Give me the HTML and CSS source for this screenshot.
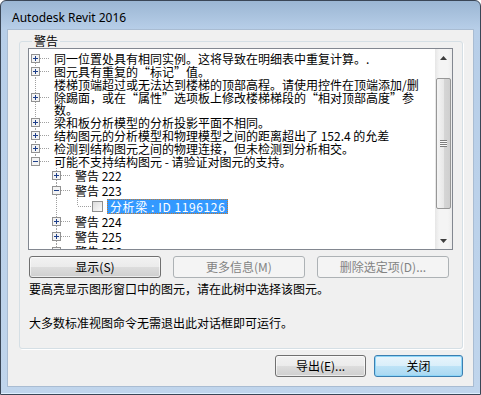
FILE: index.html
```html
<!DOCTYPE html>
<html lang="zh-CN">
<head>
  <meta charset="UTF-8" />
  <title>Autodesk Revit 2016</title>
  <link rel="stylesheet" href="styles.css">
</head>
<body>

  <div class="window">
    <div class="titlebar">Autodesk Revit 2016</div>

    <div class="client">
      <fieldset class="group">
        <legend>警告</legend>

        <div class="tree-box">
          <div class="tree">
            <div class="row">
              <span class="c start"><svg class="exp" viewBox="0 0 9 9"><rect x=".5" y=".5" width="8" height="8" /><path d="M2 4.5h5M4.5 2v5" /></svg></span>
              <span class="lbl">同一位置处具有相同实例。这将导致在明细表中重复计算。.</span>
            </div>
            <div class="row">
              <span class="c tee"><svg class="exp" viewBox="0 0 9 9"><rect x=".5" y=".5" width="8" height="8" /><path d="M2 4.5h5M4.5 2v5" /></svg></span>
              <span class="lbl">图元具有重复的“标记”值。</span>
            </div>
            <div class="row multi">
              <span class="c tee"><svg class="exp" viewBox="0 0 9 9"><rect x=".5" y=".5" width="8" height="8" /><path d="M2 4.5h5M4.5 2v5" /></svg></span>
              <span class="lbl">楼梯顶端超过或无法达到楼梯的顶部高程。请使用控件在顶端添加/删<br>除踢面，或在“属性”选项板上修改楼梯梯段的“相对顶部高度”参<br>数。</span>
            </div>
            <div class="row">
              <span class="c tee"><svg class="exp" viewBox="0 0 9 9"><rect x=".5" y=".5" width="8" height="8" /><path d="M2 4.5h5M4.5 2v5" /></svg></span>
              <span class="lbl">梁和板分析模型的分析投影平面不相同。</span>
            </div>
            <div class="row">
              <span class="c tee"><svg class="exp" viewBox="0 0 9 9"><rect x=".5" y=".5" width="8" height="8" /><path d="M2 4.5h5M4.5 2v5" /></svg></span>
              <span class="lbl">结构图元的分析模型和物理模型之间的距离超出了 152.4 的允差</span>
            </div>
            <div class="row">
              <span class="c tee"><svg class="exp" viewBox="0 0 9 9"><rect x=".5" y=".5" width="8" height="8" /><path d="M2 4.5h5M4.5 2v5" /></svg></span>
              <span class="lbl">检测到结构图元之间的物理连接，但未检测到分析相交。</span>
            </div>
            <div class="row">
              <span class="c end"><svg class="exp" viewBox="0 0 9 9"><rect x=".5" y=".5" width="8" height="8" /><path d="M2 4.5h5" /></svg></span>
              <span class="lbl">可能不支持结构图元 - 请验证对图元的支持。</span>
            </div>

            <div class="row sub">
              <span class="c"></span>
              <span class="c tee"><svg class="exp" viewBox="0 0 9 9"><rect x=".5" y=".5" width="8" height="8" /><path d="M2 4.5h5M4.5 2v5" /></svg></span>
              <span class="lbl">警告 222</span>
            </div>
            <div class="row sub">
              <span class="c"></span>
              <span class="c tee"><svg class="exp" viewBox="0 0 9 9"><rect x=".5" y=".5" width="8" height="8" /><path d="M2 4.5h5" /></svg></span>
              <span class="lbl">警告 223</span>
            </div>
            <div class="row leaf">
              <span class="c"></span>
              <span class="c pipe"></span>
              <span class="c end"></span>
              <span class="check"></span>
              <span class="lbl selected">分析梁 : ID 1196126</span>
            </div>
            <div class="row sub">
              <span class="c"></span>
              <span class="c tee"><svg class="exp" viewBox="0 0 9 9"><rect x=".5" y=".5" width="8" height="8" /><path d="M2 4.5h5M4.5 2v5" /></svg></span>
              <span class="lbl">警告 224</span>
            </div>
            <div class="row sub">
              <span class="c"></span>
              <span class="c tee"><svg class="exp" viewBox="0 0 9 9"><rect x=".5" y=".5" width="8" height="8" /><path d="M2 4.5h5M4.5 2v5" /></svg></span>
              <span class="lbl">警告 225</span>
            </div>
            <div class="row sub">
              <span class="c"></span>
              <span class="c tee"><svg class="exp" viewBox="0 0 9 9"><rect x=".5" y=".5" width="8" height="8" /><path d="M2 4.5h5M4.5 2v5" /></svg></span>
              <span class="lbl">警告 226</span>
            </div>
          </div>

          <!-- vertical scrollbar -->
          <div class="vscroll">
            <div class="arrow"><svg width="7" height="4" viewBox="0 0 7 4"><path d="M3.5 0L7 4H0z" /></svg></div>
            <div class="track">
              <div class="thumb"><span class="grip"></span></div>
            </div>
            <div class="arrow"><svg width="7" height="4" viewBox="0 0 7 4"><path d="M0 0h7L3.5 4z" /></svg></div>
          </div>
        </div>

        <div class="btn-row">
          <button class="btn">显示(S)</button>
          <button class="btn" disabled>更多信息(M)</button>
          <button class="btn" disabled>删除选定项(D)...</button>
        </div>

        <p class="hint">要高亮显示图形窗口中的图元，请在此树中选择该图元。</p>
        <p class="hint second">大多数标准视图命令无需退出此对话框即可运行。</p>
      </fieldset>

      <div class="footer">
        <button class="btn small">导出(E)...</button>
        <button class="btn small default">关闭</button>
      </div>
    </div>
  </div>

</body>
</html>
```

FILE: styles.css
```css
body {
  margin: 0;
  background: #fff;
  font-family: "Noto Sans CJK SC", sans-serif;
  font-size: 12px;
  color: #000;
}

.window {
  width: 481px;
  height: 395px;
  box-sizing: border-box;
  border: 1px solid #3a4656;
  border-radius: 6px 6px 0 0;
  background: linear-gradient(#9bb6d3, #b7cee8 28px, #c0d5ec);
  padding: 0 6px 7px;
  display: flex;
  flex-direction: column;
  box-shadow: inset 0 -1px 0 #dff0ff;
}

.titlebar {
  height: 23px;
  padding: 5px 0 0 5px;
  font-family: "Noto Sans", sans-serif;
  font-size: 12px;
  line-height: 24px;
  color: #000;
}

.client {
  flex: 1;
  background: #f0f0f0;
  border: 1px solid #a9bcd2;
  padding: 4px 10px 0 11px;
}

/* group box */
.group {
  margin: 0;
  padding: 0 9px 18px 8px;
  border: 1px solid #d5dfe5;
  border-radius: 3px;
  box-shadow: 1px 1px 0 #fff;
}

.group legend {
  margin-left: 4px;
  padding: 0 2px;
  line-height: 14px;
}

/* tree */
.tree-box {
  height: 200px;
  border: 1px solid #828790;
  background: #fff;
  display: flex;
}

.tree {
  flex: 1;
  overflow: hidden;
  padding-top: 3px;
}

.row {
  display: flex;
  height: 13px;
  line-height: 13px;
  white-space: nowrap;
}

.row.multi {
  height: 38px;
  line-height: 12.5px;
}

.row.multi .lbl {
  padding-top: 1px;
}

.row.sub {
  height: 15px;
  line-height: 15px;
}

.row.leaf {
  height: 16px;
  line-height: 13px;
  align-items: center;
}

.c {
  flex: none;
  width: 21px;
  align-self: stretch;
  display: flex;
  align-items: center;
  padding-left: 2px;
  box-sizing: border-box;
  background-repeat: no-repeat;
}

.c.pipe {
  background-image: repeating-linear-gradient(#a0a0a0 0 1px, transparent 1px 2px);
  background-position: 6px 0;
  background-size: 1px 100%;
}

.c.tee {
  background-image:
    repeating-linear-gradient(#a0a0a0 0 1px, transparent 1px 2px),
    repeating-linear-gradient(to right, #a0a0a0 0 1px, transparent 1px 2px);
  background-position: 6px 0, 7px 50%;
  background-size: 1px 100%, 14px 1px;
}

.c.end {
  background-image:
    repeating-linear-gradient(#a0a0a0 0 1px, transparent 1px 2px),
    repeating-linear-gradient(to right, #a0a0a0 0 1px, transparent 1px 2px);
  background-position: 6px 0, 7px 50%;
  background-size: 1px 50%, 14px 1px;
}

.c.start {
  background-image:
    repeating-linear-gradient(#a0a0a0 0 1px, transparent 1px 2px),
    repeating-linear-gradient(to right, #a0a0a0 0 1px, transparent 1px 2px);
  background-position: 6px 100%, 7px 50%;
  background-size: 1px 50%, 14px 1px;
}

.exp {
  width: 9px;
  height: 9px;
  shape-rendering: crispEdges;
}

.exp rect {
  fill: #f3f3f3;
  stroke: #929292;
}

.exp path {
  stroke: #1e3f8a;
}

.lbl {
  margin-left: 2px;
  padding: 0 2px;
}

.check {
  flex: none;
  width: 11px;
  height: 11px;
  box-sizing: border-box;
  border: 1px solid #8e8f8f;
  background: linear-gradient(135deg, #dcdcdc, #fbfbfb);
  margin-right: 2px;
}

.lbl.selected {
  background: #3399ff;
  color: #fff;
  border: 1px dotted #c77b2f;
  padding: 0 2px;
  line-height: 13px;
  letter-spacing: 0.6px;
}

/* scrollbar */
.vscroll {
  width: 17px;
  display: flex;
  flex-direction: column;
  background: linear-gradient(to right, #e6e6e6, #f4f4f4 25%, #f4f4f4 75%, #ececec);
}

.arrow {
  height: 17px;
  display: flex;
  align-items: center;
  justify-content: center;
}

.arrow svg {
  fill: #3d3d3d;
}

.track {
  flex: 1;
  padding: 12px 1px 0;
}

.thumb {
  height: 131px;
  box-sizing: border-box;
  border: 1px solid #979797;
  border-radius: 2px;
  background: linear-gradient(to right, #f4f4f4, #e8e8e8 50%, #d6d6d6 51%, #cfcfcf);
  display: flex;
  align-items: center;
  justify-content: center;
}

.grip {
  width: 7px;
  height: 7px;
  background: repeating-linear-gradient(#7d7d7d 0 1px, #fafafa 1px 2px);
}

/* buttons */
.btn-row {
  display: flex;
  gap: 12px;
  margin-top: 6px;
  padding-left: 1px;
}

.btn {
  width: 132px;
  height: 22px;
  padding: 0;
  border: 1px solid #707070;
  border-radius: 3px;
  background: linear-gradient(#f2f2f2, #ebebeb 50%, #dddddd 50%, #cfcfcf);
  font-family: "Noto Sans CJK SC", sans-serif;
  font-size: 12px;
  line-height: 18px;
  color: #000;
  box-shadow: inset 0 0 0 1px rgba(255, 255, 255, 0.6);
}

.btn:disabled {
  border-color: #adb2b5;
  background: #f4f4f4;
  color: #838383;
  box-shadow: none;
}

.btn.small {
  width: 91px;
}

.btn.default {
  width: 89px;
  border-color: #3c7fb1;
  background: linear-gradient(#e9f5fc, #d9eefa 50%, #bee3f7 50%, #a9d8f2);
  box-shadow: inset 0 0 0 1px #8ed6f8;
}

.hint {
  margin: 4px 0 0 1px;
  line-height: 14px;
}

.hint.second {
  margin-top: 20px;
}

.footer {
  display: flex;
  justify-content: flex-end;
  gap: 8px;
  padding: 6px 0 0;
}
```
